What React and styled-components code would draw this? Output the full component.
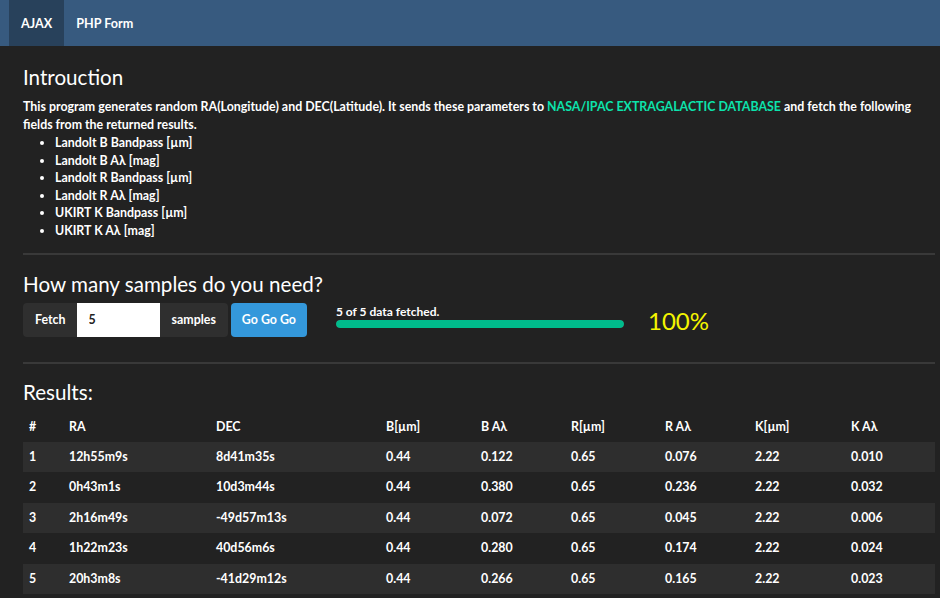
import React from 'react'
import styled, { createGlobalStyle } from 'styled-components'

const GlobalStyle = createGlobalStyle`
  html, body {
    margin: 0;
    padding: 0;
    background: #222222;
    color: #ffffff;
    font-family: Lato, "Open Sans", sans-serif;
    font-size: 12.4px;
  }
  * { box-sizing: border-box; }
`

const Navbar = styled.nav`
  display: flex;
  height: 46px;
  padding-left: 9px;
  background: #375a7f;
`

const NavItem = styled.a`
  display: flex;
  align-items: center;
  padding: 0 12px 0 12px;
  color: #ffffff;
  font-weight: 700;
  font-size: 12.6px;
  text-decoration: none;
  background: ${p => (p.$active ? '#28415b' : 'transparent')};
`

const Container = styled.main`
  padding: 0 5px 0 23px;
`

const Heading = styled.h2`
  margin: ${p => p.$top || 20}px 0 ${p => p.$bottom || 7}px;
  font-size: 20.6px;
  font-weight: 400;
  line-height: 24px;
`

const Intro = styled.p`
  margin: 0;
  line-height: 18px;
  font-weight: 700;

  a {
    color: #0ce3ac;
    text-decoration: none;
  }
`

const Fields = styled.ul`
  margin: 0;
  padding-left: 32px;
  line-height: 17.6px;
  font-weight: 700;
`

const Rule = styled.hr`
  margin: ${p => p.$top}px 0 0;
  border: 0;
  border-top: 2px solid #393939;
`

const FetchRow = styled.div`
  display: flex;
  align-items: center;
  margin-bottom: 25px;
`

const InputGroup = styled.div`
  display: flex;
  height: 34px;
`

const Addon = styled.span`
  display: flex;
  align-items: center;
  padding: ${p => (p.$left ? '0 11px 0 12px' : '0 12px')};
  background: #2f2f2f;
  font-weight: 700;
  border-radius: ${p => (p.$left ? '4px 0 0 4px' : '0 4px 4px 0')};
`

const NumberInput = styled.input`
  width: 83px;
  border: 0;
  padding: 0 12px;
  background: #ffffff;
  color: #222222;
  font: 700 12.4px Lato, sans-serif;
  outline: none;
`

const GoButton = styled.button`
  margin-left: 3px;
  height: 34px;
  padding: 0 11px;
  border: 0;
  border-radius: 4px;
  background: #3498db;
  color: #ffffff;
  font: 700 12.4px Lato, sans-serif;
`

const Progress = styled.div`
  display: flex;
  flex-direction: column;
  width: 288px;
  margin-left: 29px;
  margin-top: -6px;
`

const ProgressLabel = styled.span`
  font-size: 12px;
  font-weight: 700;
  line-height: 14px;
`

const Track = styled.div`
  height: 8px;
  margin-top: 1px;
  border-radius: 4px;
  background: #464545;
  overflow: hidden;
`

const Fill = styled.div`
  height: 100%;
  background: #00bc8c;
  border-radius: 4px;
`

const Percent = styled.span`
  margin-left: 24px;
  margin-top: 2px;
  color: #f5f500;
  font-size: 24px;
  line-height: 1;
`

const Table = styled.table`
  width: 100%;
  margin-top: 8px;
  border-collapse: collapse;
  table-layout: fixed;
  font-weight: 700;

  th, td {
    padding: 6px 6px;
    line-height: 18.4px;
    text-align: left;
  }

  tbody tr:nth-child(odd) {
    background: #2e2e2e;
  }
`

const columns = [
  { label: '#', width: 40 },
  { label: 'RA', width: 147 },
  { label: 'DEC', width: 170 },
  { label: 'B[µm]', width: 95 },
  { label: 'B Aλ', width: 90 },
  { label: 'R[µm]', width: 94 },
  { label: 'R Aλ', width: 90 },
  { label: 'K[µm]', width: 96 },
  { label: 'K Aλ', width: 90 },
]

const rows = [
  ['1', '12h55m9s', '8d41m35s', '0.44', '0.122', '0.65', '0.076', '2.22', '0.010'],
  ['2', '0h43m1s', '10d3m44s', '0.44', '0.380', '0.65', '0.236', '2.22', '0.032'],
  ['3', '2h16m49s', '-49d57m13s', '0.44', '0.072', '0.65', '0.045', '2.22', '0.006'],
  ['4', '1h22m23s', '40d56m6s', '0.44', '0.280', '0.65', '0.174', '2.22', '0.024'],
  ['5', '20h3m8s', '-41d29m12s', '0.44', '0.266', '0.65', '0.165', '2.22', '0.023'],
]

const fields = [
  'Landolt B Bandpass [µm]',
  'Landolt B Aλ [mag]',
  'Landolt R Bandpass [µm]',
  'Landolt R Aλ [mag]',
  'UKIRT K Bandpass [µm]',
  'UKIRT K Aλ [mag]',
]

const App = () => {
  const fetched = 5
  const total = 5
  const pct = Math.round((fetched / total) * 100)

  return (
    <>
      <GlobalStyle />
      <Navbar>
        <NavItem href="#" $active>AJAX</NavItem>
        <NavItem href="#">PHP Form</NavItem>
      </Navbar>
      <Container>
        <Heading $top={19} $bottom={9}>Introuction</Heading>
        <Intro>
          This program generates random RA(Longitude) and DEC(Latitude). It sends these parameters to{' '}
          <a href="#">NASA/IPAC EXTRAGALACTIC DATABASE</a> and fetch the following fields from the returned results.
        </Intro>
        <Fields>
          {fields.map(f => <li key={f}>{f}</li>)}
        </Fields>

        <Rule $top={13} />
        <Heading $top={17}>How many samples do you need?</Heading>
        <FetchRow>
          <InputGroup>
            <Addon $left>Fetch</Addon>
            <NumberInput defaultValue="5" />
            <Addon>samples</Addon>
          </InputGroup>
          <GoButton>Go Go Go</GoButton>
          <Progress>
            <ProgressLabel>{fetched} of {total} data fetched.</ProgressLabel>
            <Track>
              <Fill style={{ width: `${pct}%` }} />
            </Track>
          </Progress>
          <Percent>{pct}%</Percent>
        </FetchRow>

        <Rule $top={0} />
        <Heading $top={16} $bottom={8}>Results:</Heading>
        <Table>
          <colgroup>
            {columns.map(c => <col key={c.label} style={{ width: c.width }} />)}
          </colgroup>
          <thead>
            <tr>{columns.map(c => <th key={c.label}>{c.label}</th>)}</tr>
          </thead>
          <tbody>
            {rows.map(r => (
              <tr key={r[0]}>{r.map((v, i) => <td key={i}>{v}</td>)}</tr>
            ))}
          </tbody>
        </Table>
      </Container>
    </>
  )
}

export default App
